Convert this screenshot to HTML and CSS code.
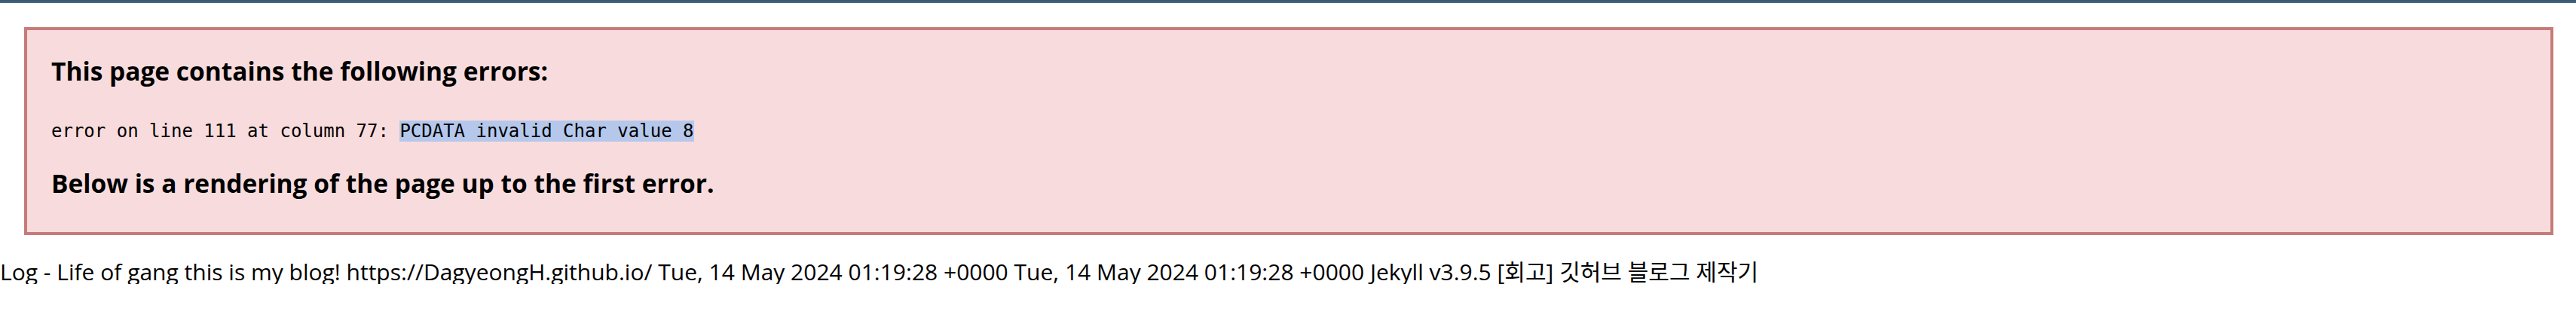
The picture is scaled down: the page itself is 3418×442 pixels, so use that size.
FILE: index.html
```html
<!DOCTYPE html>
<html lang="ko">
<head>
<meta charset="utf-8">
<title>Log - Life of gang</title>
<link rel="stylesheet" href="styles.css">
</head>
<body>
<div class="topbar"></div>
<div class="parsererror">
  <h3 class="err-title">This page contains the following errors:</h3>
  <div class="err-detail">error on line 111 at column 77: <span class="sel">PCDATA invalid Char value 8</span></div>
  <h3 class="err-title err-below">Below is a rendering of the page up to the first error.</h3>
</div>
<div class="feed">Log - Life of gang this is my blog! https://DagyeongH.github.io/ Tue, 14 May 2024 01:19:28 +0000 Tue, 14 May 2024 01:19:28 +0000 Jekyll v3.9.5 [회고] 깃허브 블로그 제작기</div>
</body>
</html>
```
FILE: styles.css
```css
html, body {
  margin: 0;
  padding: 0;
  background: #ffffff;
  color: #000000;
}

.topbar {
  height: 4px;
  background: linear-gradient(#36556e, #4a6a84);
}

.parsererror {
  margin: 32px 30px 32px 32px;
  border: 4px solid #c67b7a;
  background: #f8dcdd;
  padding: 0 32px 45px 32px;
}

.err-title {
  margin: 34px 0 0 0;
  font-family: "Open Sans", "Noto Sans CJK KR", sans-serif;
  font-weight: 700;
  font-size: 33.5px;
  line-height: 40px;
  white-space: nowrap;
}

.err-below {
  margin-top: 35px;
}

.err-detail {
  margin-top: 46px;
  font-family: "DejaVu Sans Mono", monospace;
  font-size: 24px;
  line-height: 28px;
  white-space: pre;
}

.sel {
  background: #b5c8ec;
}

.feed {
  font-family: "Open Sans", "Noto Sans CJK KR", sans-serif;
  font-size: 30px;
  line-height: 33px;
  white-space: nowrap;
}
```
